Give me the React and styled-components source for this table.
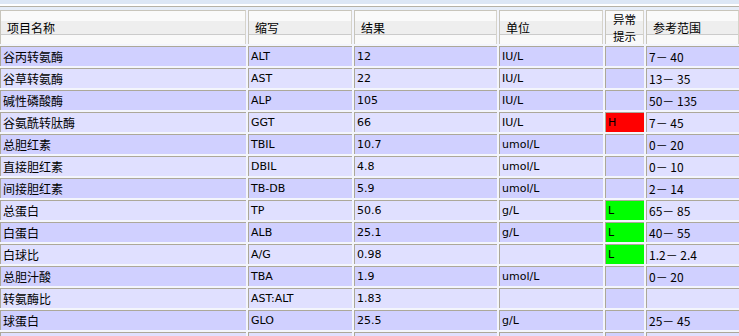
import styled, { createGlobalStyle } from "styled-components";

const GlobalStyle = createGlobalStyle`
  html, body {
    margin: 0;
    padding: 0;
    overflow: hidden;
    background: #f3f5fc;
  }
`;

const COLS = "246px 104px 143px 104px 39px 1fr";

const rows = [
  ["谷丙转氨酶", "ALT", "12", "IU/L", "", "7－ 40"],
  ["谷草转氨酶", "AST", "22", "IU/L", "", "13－ 35"],
  ["碱性磷酸酶", "ALP", "105", "IU/L", "", "50－ 135"],
  ["谷氨酰转肽酶", "GGT", "66", "IU/L", "H", "7－ 45"],
  ["总胆红素", "TBIL", "10.7", "umol/L", "", "0－ 20"],
  ["直接胆红素", "DBIL", "4.8", "umol/L", "", "0－ 10"],
  ["间接胆红素", "TB-DB", "5.9", "umol/L", "", "2－ 14"],
  ["总蛋白", "TP", "50.6", "g/L", "L", "65－ 85"],
  ["白蛋白", "ALB", "25.1", "g/L", "L", "40－ 55"],
  ["白球比", "A/G", "0.98", "", "L", "1.2－ 2.4"],
  ["总胆汁酸", "TBA", "1.9", "umol/L", "", "0－ 20"],
  ["转氨酶比", "AST:ALT", "1.83", "", "", ""],
  ["球蛋白", "GLO", "25.5", "g/L", "", "25－ 45"],
  ["", "", "", "", "", ""],
];

const flagColor = { H: "#ff0000", L: "#00ff00" };

const Page = styled.div`
  width: 739px;
  font-family: "DejaVu Sans", "Noto Sans CJK SC", sans-serif;
  color: #000;
`;

const TopStrip = styled.div`
  height: 10px;
  background: linear-gradient(
    #dde7f5 0 4px,
    #ffffff 4px 6px,
    #b6b2a6 6px 7px,
    #e6edf8 7px 10px
  );
`;

const Grid = styled.div`
  display: flex;
  flex-direction: column;
  gap: 2px;
`;

const Row = styled.div`
  display: grid;
  grid-template-columns: ${COLS};
  column-gap: 2px;
  height: ${({ $head }) => ($head ? "34px" : "20px")};
`;

const HeadCell = styled.div`
  box-sizing: border-box;
  border-top: 1px solid #c8c5bb;
  border-left: 1px solid #c8c5bb;
  border-right: 1px solid #d6d3ca;
  background: linear-gradient(
    #fafafa 0 10px,
    #eeeeee 10px 23px,
    #cbcbcb 23px 24px,
    #f9f9f9 24px
  );
  display: flex;
  flex-direction: column;
  justify-content: center;
  align-items: ${({ $center }) => ($center ? "center" : "flex-start")};
  padding-left: ${({ $center }) => ($center ? "0" : "6px")};
  padding-bottom: ${({ $center }) => ($center ? "0" : "1px")};
  font-family: "Noto Sans CJK SC", sans-serif;
  font-size: 12px;
  line-height: 15px;
  white-space: nowrap;
`;

const HeadLine = styled.div`
  font-size: 11.5px;
  line-height: 16.7px;
  height: 16.7px;
`;

const Cell = styled.div`
  box-sizing: border-box;
  border-top: 1px solid #aca899;
  border-left: 1px solid #aca899;
  background: ${({ $bg }) => $bg};
  padding-left: 2px;
  font-size: ${({ $cjk }) => ($cjk ? "12px" : "11px")};
  font-family: ${({ $cjk }) =>
    $cjk
      ? '"Noto Sans CJK SC", sans-serif'
      : '"DejaVu Sans", "Noto Sans CJK SC", sans-serif'};
  line-height: 19px;
  white-space: nowrap;
  overflow: hidden;
`;

const heads = ["项目名称", "缩写", "结果", "单位", ["异常", "提示"], "参考范围"];

export default function App() {
  return (
    <Page>
      <GlobalStyle />
      <TopStrip />
      <Grid>
        <Row $head>
          {heads.map((h, i) => (
            <HeadCell key={i} $center={Array.isArray(h)}>
              {Array.isArray(h)
                ? h.map((line) => <HeadLine key={line}>{line}</HeadLine>)
                : h}
            </HeadCell>
          ))}
        </Row>
        {rows.map((r, ri) => {
          const base = ri % 2 === 0 ? "#d0d0ff" : "#e0e0ff";
          return (
            <Row key={ri}>
              {r.map((v, ci) => {
                let bg = base;
                if (ci === 4) bg = flagColor[v] || "#d0d0ff";
                return (
                  <Cell key={ci} $bg={bg} $cjk={ci === 0 || ci === 5}>
                    {v}
                  </Cell>
                );
              })}
            </Row>
          );
        })}
      </Grid>
    </Page>
  );
}
